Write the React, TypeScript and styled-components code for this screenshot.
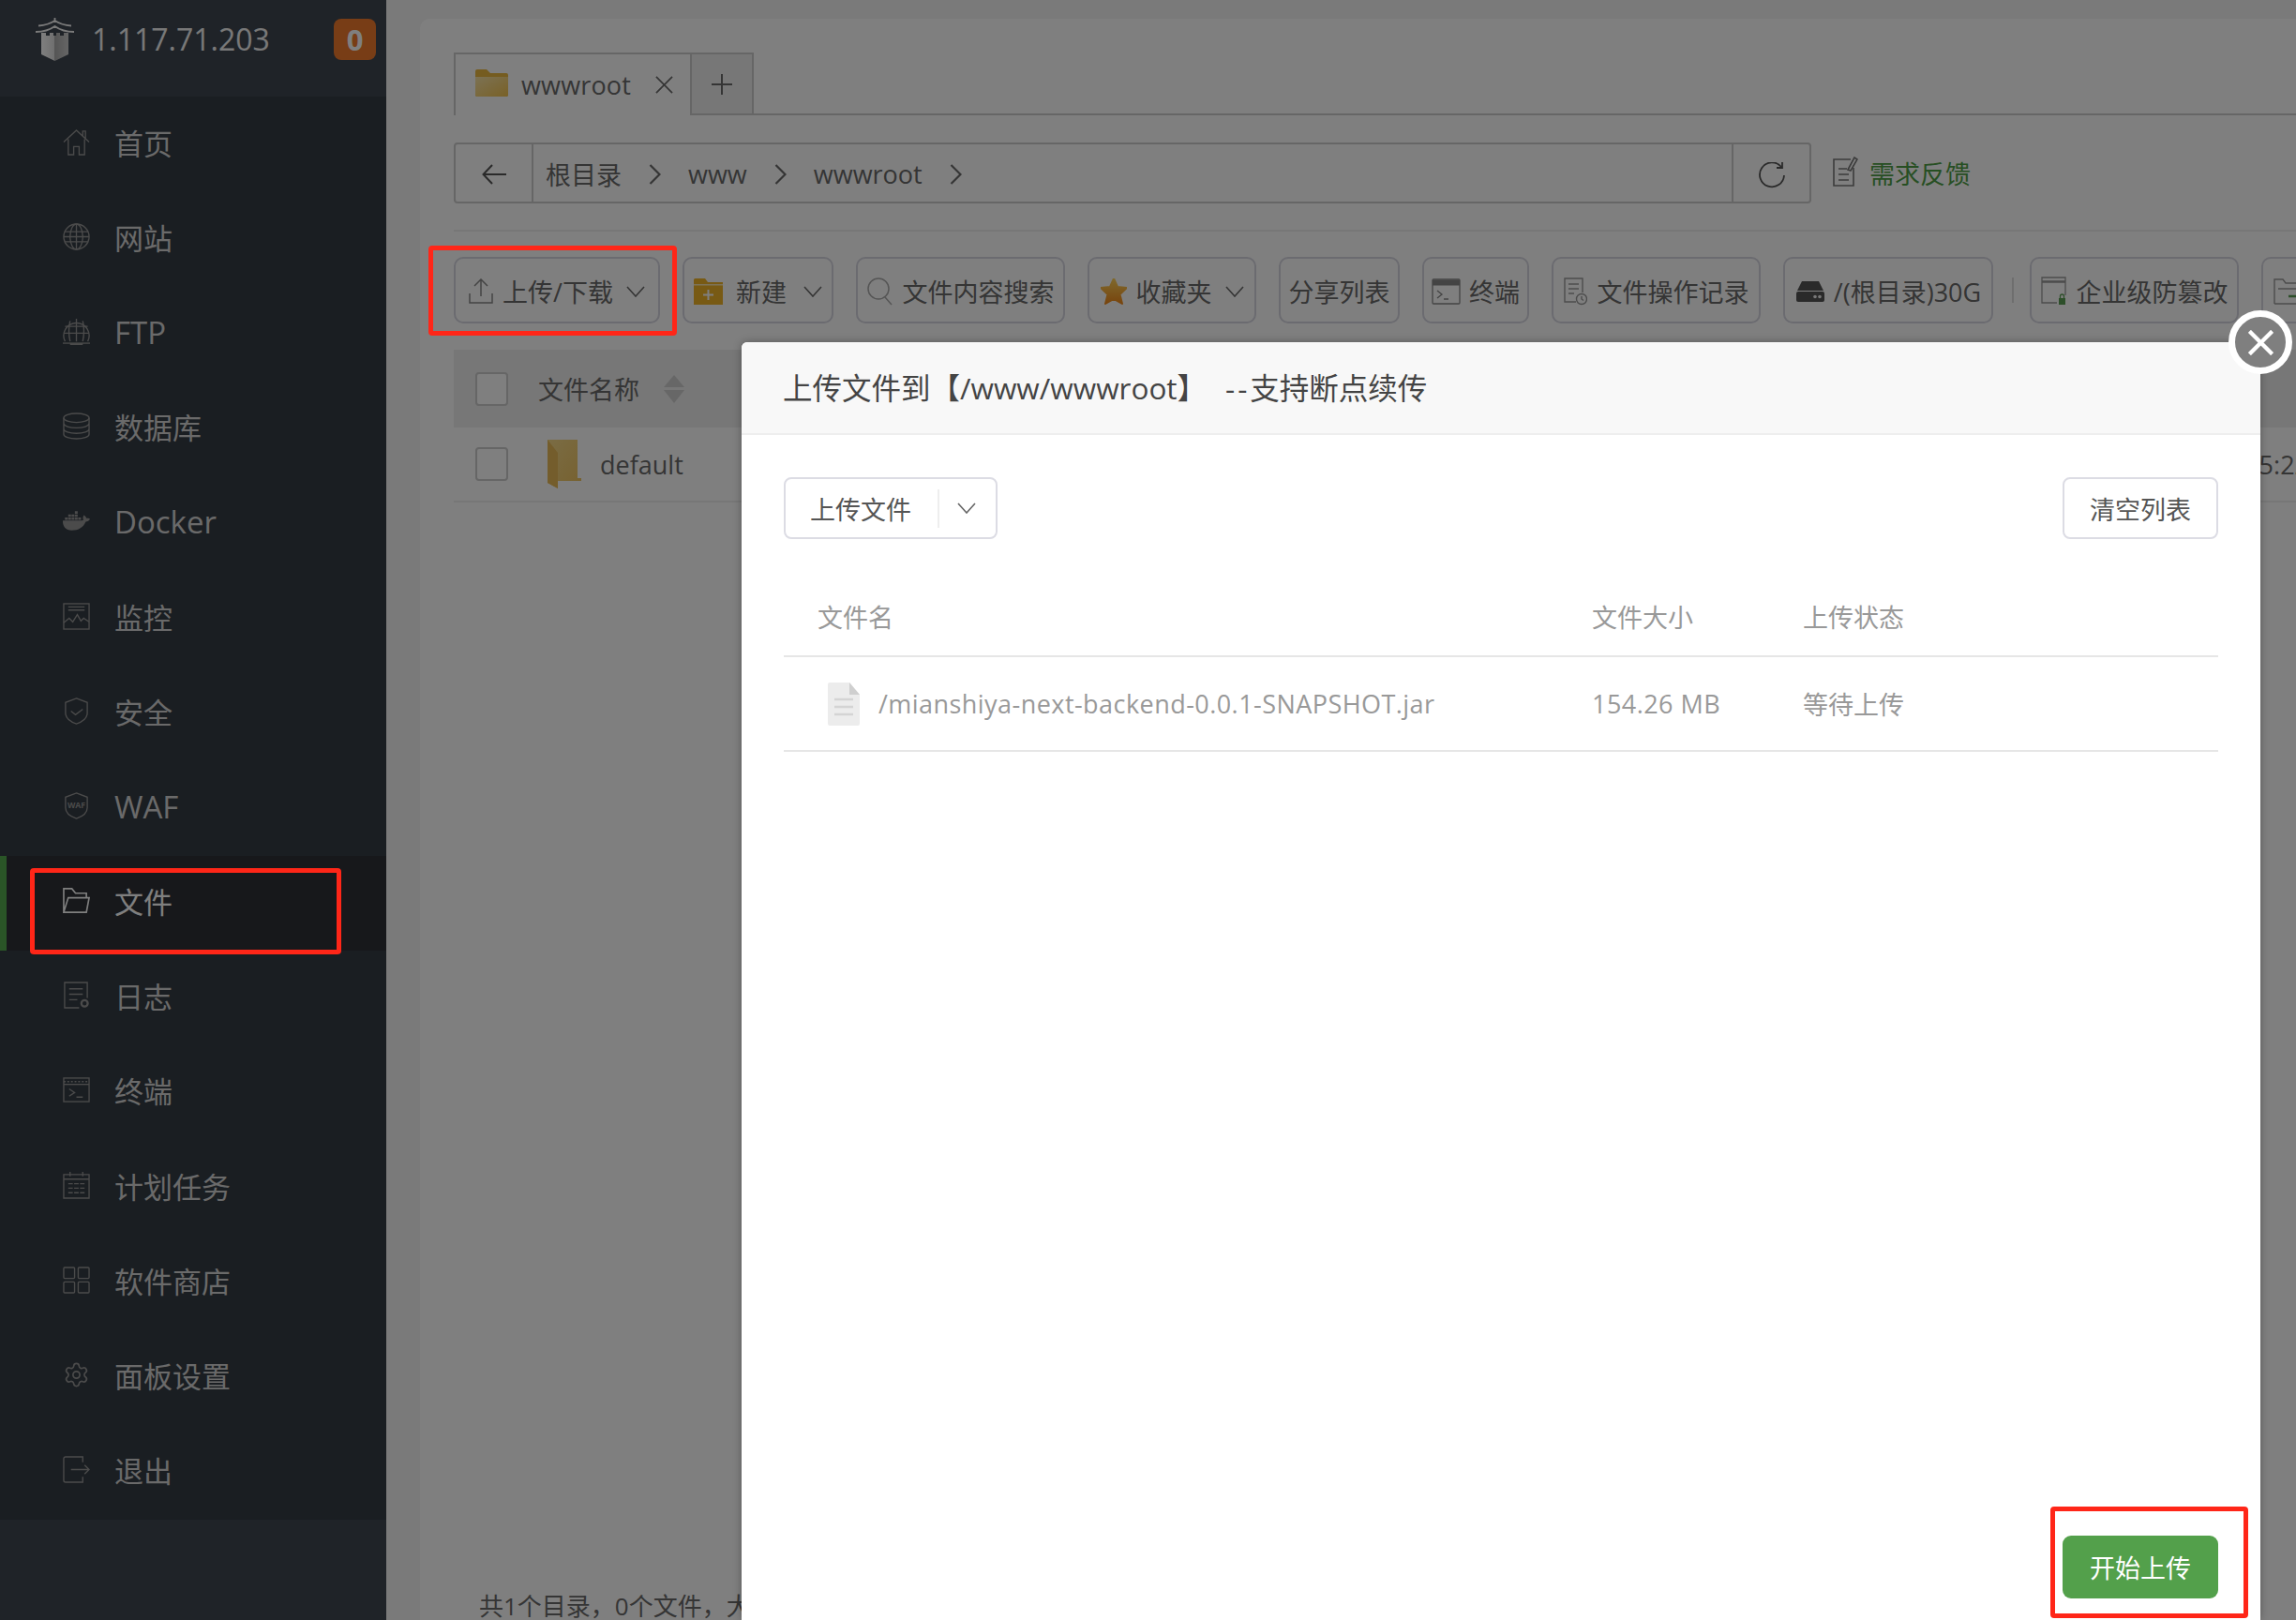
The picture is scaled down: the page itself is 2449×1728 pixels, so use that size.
import React from 'react';
import styled, { createGlobalStyle } from 'styled-components';
import { FaDocker } from 'react-icons/fa';
import { Settings } from 'lucide-react';

const Global = createGlobalStyle`
  html, body { margin: 0; padding: 0; width: 2449px; height: 1728px; overflow: hidden; background: #f4f4f4; }
  #root { width: 2449px; height: 1728px; }
  * { box-sizing: border-box; }
  body { font-family: "Open Sans", "Noto Sans CJK SC", sans-serif; }
`;

const Page = styled.div`
  position: relative; width: 2449px; height: 1728px; display: flex; overflow: hidden; background: #f4f4f4;
`;
const Sidebar = styled.aside`
  width: 412px; height: 100%; flex-shrink: 0; background: #3e4650; display: flex; flex-direction: column;
`;
const SideHead = styled.div`
  height: 103px; display: flex; align-items: flex-start; padding: 19px 11px 0 38px; color: #eee;
`;
const Ip = styled.span`
  margin-left: 19px; font-size: 32px; line-height: 46px; color: #f0f0f0;
`;
const Badge = styled.span`
  margin-left: auto; margin-top: 1px; width: 45px; height: 44px; border-radius: 8px; background: #f07a2c; color: #fff;
  font-size: 31px; font-weight: 700; display: flex; align-items: center; justify-content: center;
`;
const Nav = styled.nav`
  background: #343c44; display: flex; flex-direction: column;
`;
const NavItem = styled.div<{ $active?: boolean }>`
  height: 101.2px; display: flex; align-items: center; padding-left: ${p => (p.$active ? 60 : 67)}px;
  border-left: ${p => (p.$active ? '7px solid #54aa4e' : '0')};
  background: ${p => (p.$active ? '#2e3036' : 'transparent')};
  color: ${p => (p.$active ? '#fff' : '#d4d4d4')};
  font-size: 31px; padding-bottom: 2px;
  & > svg { width: 29px; height: 29px; flex-shrink: 0; margin-top: -3px; color: ${p => (p.$active ? '#fff' : '#969696')}; }
`;
const NavLabel = styled.span<{ $latin?: boolean }>`
  margin-left: 26px; line-height: 40px; font-size: ${p => (p.$latin ? 33 : 31)}px;
`;

const Main = styled.main`
  flex: 1; min-width: 0; padding: 20px 0 0 36px; display: flex;
`;
const Panel = styled.section`
  flex: 1; min-width: 0; background: #fff; border-radius: 10px 0 0 0; padding-left: 36px; display: flex; flex-direction: column; overflow: hidden;
  color: #6a6a6a; font-size: 27px;
`;
const TabRow = styled.div`
  margin-top: 36px; height: 67px; display: flex; flex-shrink: 0; border-bottom: 2px solid #ccc;
`;
const Tab = styled.div`
  width: 254px; height: 67px; background: #fff; border: 2px solid #ccc; border-bottom: 0; display: flex; align-items: center; padding-left: 21px;
  & > svg:first-child { width: 35px; height: 29px; margin-top: -4px; }
`;
const TabName = styled.span`
  margin-left: 14px; width: 143px; letter-spacing: 0.15px;
`;
const TabPlus = styled.div`
  width: 66px; height: 65px; background: #eee; border: 2px solid #ccc; border-left: 0; border-bottom: 0; display: flex; align-items: center; justify-content: center;
`;
const PathRow = styled.div`
  margin-top: 29px; height: 65px; display: flex; align-items: center; flex-shrink: 0;
`;
const PathBar = styled.div`
  width: 1448px; height: 65px; border: 2px solid #ccc; border-radius: 4px; display: flex; align-items: center;
`;
const BackCell = styled.div`
  width: 83px; height: 100%; border-right: 2px solid #ccc; display: flex; align-items: center; justify-content: center; padding-top: 3px;
`;
const Crumbs = styled.div`
  flex: 1; display: flex; align-items: center; gap: 29px; padding: 2px 0 0 13px; color: #6a6a6a;
`;
const RefreshCell = styled.div`
  width: 83px; height: 100%; border-left: 2px solid #ccc; display: flex; align-items: center; justify-content: center; padding-top: 4px;
`;
const Feedback = styled.div`
  margin-left: 23px; display: flex; align-items: center; gap: 12px; color: #4f9e47; font-size: 27px;
  & > svg { margin-top: -3px; }
`;
const Rule = styled.div`
  margin-top: 28px; height: 2px; background: #eee; flex-shrink: 0;
`;
const Toolbar = styled.div`
  margin-top: 27px; height: 71px; display: flex; gap: 24px; flex-shrink: 0; align-items: center;
`;
const ToolBtn = styled.div<{ $w: number; $gap?: number; $left?: boolean }>`
  width: ${p => p.$w}px; height: 71px; flex-shrink: 0; border: 2px solid #d6d6e0; border-radius: 10px; display: flex; align-items: center;
  justify-content: ${p => (p.$left ? 'flex-start' : 'center')}; padding: ${p => (p.$left ? '2px 0 0 11px' : '2px 0 0')}; gap: ${p => p.$gap ?? 11}px;
  color: #6a6a6a; white-space: nowrap; overflow: hidden;
  & > svg:last-child:not(:first-child) { margin-left: 4px; }
`;
const ToolSep = styled.div`
  width: 2px; height: 27px; background: #ddd; margin: 0 -7px 0 -4px; flex-shrink: 0;
`;
const THead = styled.div`
  margin-top: 28px; height: 83px; background: #eee; display: flex; align-items: center; padding-left: 23px; flex-shrink: 0;
`;
const Check = styled.div`
  width: 35px; height: 36px; border: 2px solid #ccc; border-radius: 4px; background: #fff; flex-shrink: 0;
`;
const THeadLabel = styled.span`
  margin-left: 32px; margin-right: 26px;
`;
const Row = styled.div`
  height: 80px; display: flex; align-items: center; padding-left: 23px; border-bottom: 2px solid #eee; flex-shrink: 0;
`;
const RowFolder = styled.div`
  margin-left: 42px; width: 56px; display: flex;
`;
const RowName = styled.span``;
const RowTime = styled.span`
  margin-left: auto; margin-right: -52px; flex-shrink: 0; white-space: nowrap;
`;
const PanelFoot = styled.div`
  margin-top: auto; padding-left: 27px; line-height: 30px; font-size: 26px; white-space: nowrap; color: #6a6a6a;
`;

const Overlay = styled.div`
  position: absolute; inset: 0; background: rgba(0, 0, 0, 0.5);
`;
const Modal = styled.div`
  position: absolute; left: 791px; top: 365px; width: 1620px; height: 1363px; background: #fff; border-radius: 6px 6px 0 0;
  box-shadow: 0 0 10px rgba(0,0,0,.3); display: flex; flex-direction: column; color: #555;
`;
const ModalHead = styled.header`
  height: 99px; background: #f8f8f8; border-bottom: 2px solid #eee; border-radius: 6px 6px 0 0; display: flex; align-items: center; padding: 0 44px 4px; font-size: 31.5px; color: #444; white-space: pre; flex-shrink: 0;
`;
const TitleTail = styled.span`
  margin-left: 20px;
`;
const Dashes = styled.span`
  letter-spacing: 3px;
`;
const ModalBody = styled.div`
  flex: 1; padding: 45px 45px 23px 45px; display: flex; flex-direction: column; min-height: 0;
`;
const ModalTools = styled.div`
  display: flex; justify-content: space-between; align-items: center; flex-shrink: 0;
`;
const Split = styled.div`
  width: 228px; height: 66px; border: 2px solid #dcdce4; border-radius: 8px; display: flex; align-items: center; font-size: 27px; color: #555; padding-left: 26px;
`;
const SplitLine = styled.span`
  width: 2px; height: 41px; background: #eee; margin: 0 19px 0 28px;
`;
const Clear = styled.div`
  width: 166px; height: 66px; border: 2px solid #dcdce4; border-radius: 8px; display: flex; align-items: center; justify-content: center; font-size: 27px; color: #555;
`;
const Grid = styled.div<{ $h: number }>`
  display: grid; grid-template-columns: 862px 225px 1fr; height: ${p => p.$h}px; align-items: center; border-bottom: 2px solid #e6e6e6; font-size: 27px; color: #999; flex-shrink: 0;
`;
const HeadName = styled.span`
  padding-left: 36px;
`;
const FileCell = styled.span`
  display: flex; align-items: center; gap: 20px; padding: 0 0 0 47px; white-space: nowrap; letter-spacing: 0.45px;
`;
const SizeCell = styled.span`
  letter-spacing: 0.45px;
`;
const TableWrap = styled.div`
  margin-top: 40px;
`;
const ModalFoot = styled.div`
  margin-top: auto; display: flex; justify-content: flex-end;
`;
const Primary = styled.button`
  width: 166px; height: 67px; background: #53a04b; color: #fff; border: 0; border-radius: 9px; font: inherit; font-size: 27px;
`;
const CloseBtn = styled.div`
  position: absolute; left: 2377px; top: 331px; width: 68px; height: 68px; border-radius: 50%; border: 7px solid #fff; background: #7f7f7f; display: flex; align-items: center; justify-content: center;
`;
const RedBox = styled.div<{ $l: number; $t: number; $w: number; $h: number }>`
  position: absolute; left: ${p => p.$l}px; top: ${p => p.$t}px; width: ${p => p.$w}px; height: ${p => p.$h}px;
  border: 5px solid #ff2618; border-radius: 4px;
`;

const S: React.FC<React.SVGProps<SVGSVGElement> & { sw?: number }> = ({ children, sw = 1.4, ...r }) => (
  <svg viewBox="0 0 30 30" fill="none" stroke="currentColor" strokeWidth={sw} {...r}>{children}</svg>
);

const Home = () => (
  <S><path d="M1 15 15 2l14 13M22 8.500V3h3v9M6 12v17h6V20h6v9h6V12" /></S>
);
const Globe = () => (
  <S><circle cx="15" cy="15" r="14" /><ellipse cx="15" cy="15" rx="7" ry="14" /><path d="M15 1v28M2 9.500h26M2 20.500h26M1 15h28" /></S>
);
const Ftp = () => (
  <S><path d="M2.500 26A14 14 0 1 1 27.500 26" /><path d="M8 3.500C6.500 10 6.500 19 8 26M22 3.500C23.500 10 23.500 19 22 26M15 1v25M2.500 9.500h25M1 17h28" /><path d="M0 28h30" /><path d="M8 29h14" strokeWidth="2" /></S>
);
const Db = () => (
  <S><ellipse cx="15" cy="6" rx="14" ry="5" /><path d="M1 6v18c0 2.800 6.300 5 14 5s14-2.200 14-5V6M1 12c0 2.800 6.300 5 14 5s14-2.200 14-5M1 18c0 2.800 6.300 5 14 5s14-2.200 14-5" /></S>
);
const Monitor = () => (
  <S><rect x="1" y="1" width="28" height="28" /><path d="M6 4.500h18M6 8h18M1 22l6-5 4 4 5-8 4 7 3-3 6 4" /></S>
);
const Shield = () => (
  <S><path d="M15 1 27 5.500V17c0 6-6 10-12 12C9 27 3 23 3 17V5.500Z" /><path d="m9 15 5 4 8-6" /></S>
);
const Waf = () => (
  <S><path d="M15 1 27 5.500V17c0 6-6 10-12 12C9 27 3 23 3 17V5.500Z" /><text x="15" y="18" fontSize="9" fontWeight="700" fontFamily="Open Sans" textAnchor="middle" fill="currentColor" stroke="none">WAF</text></S>
);
const FolderOpen = () => (
  <S sw={1.7}><path d="M1 28V2h9l4 5h12v5M6 12h23l-3 16H1Z" /></S>
);
const LogIcon = () => (
  <S><path d="M27 18V1H2v28h16M7 8h15M7 14h15M7 20h9" /><circle cx="24" cy="24" r="3.500" strokeWidth="2.400" /></S>
);
const Term = () => (
  <S><rect x="1" y="2" width="28" height="26" /><path d="M1 6h28" strokeDasharray="2 2" strokeWidth="1.500" /><path d="M1 9h28" /><path d="m7 14 6 4-6 4M15 23h7" /></S>
);
const Cal = () => (
  <S><path d="M8 0v5M22 0v5M1 3h28v26H1ZM1 8h28" /><path d="M6 13h18M6 18h18M6 23h18" strokeDasharray="5 1.500" /></S>
);
const Apps = () => (
  <S><rect x="1" y="1" width="12" height="12" rx="1" /><rect x="17" y="1" width="12" height="12" rx="1" /><rect x="1" y="17" width="12" height="12" rx="1" /><rect x="17" y="17" width="12" height="12" rx="1" /></S>
);
const Logout = () => (
  <S><path d="M22 7V1H3a2 2 0 0 0-2 2v24a2 2 0 0 0 2 2h19v-6M9 15h20M24 10l5 5-5 5" /></S>
);
const Logo = () => (
  <svg width="41" height="46" viewBox="0 0 41 46">
    <defs>
      <linearGradient id="lg" x1="0" x2="1"><stop offset="0" stopColor="#fff" /><stop offset=".5" stopColor="#ddd" /><stop offset=".5" stopColor="#aaa" /><stop offset="1" stopColor="#ccc" /></linearGradient>
    </defs>
    <path d="M20.500 0v4M3 8.500C10 8 16 6 20.500 3 25 6 31 8 38 8.500M0 15c8 0 15-2 20.500-6C26 13 33 15 41 15" fill="none" stroke="#f4f4f4" strokeWidth="1.800" />
    <path d="M6 16h5v3h4v-3h4v3h3v-3h4v3h4v-3h5v23L20.500 46 6 39Z" fill="url(#lg)" />
  </svg>
);
const Chev = ({ w = 20, h = 12, c = '#6a6a6a' }: { w?: number; h?: number; c?: string }) => (
  <svg width={w} height={h} viewBox="0 0 20 12" fill="none" stroke={c} strokeWidth="1.600" preserveAspectRatio="none"><path d="M1 1l9 10 9-10" /></svg>
);
const ChevR = () => (
  <svg width="13" height="22" viewBox="0 0 13 22" fill="none" stroke="#6a6a6a" strokeWidth="2.200"><path d="M1.500 1l10 10-10 10" /></svg>
);
const TabFolder = () => (
  <svg viewBox="0 0 35 29">
    <defs><linearGradient id="tf" x1="0" x2="1" y1="0" y2="1"><stop offset="0" stopColor="#f8e4a8" /><stop offset="1" stopColor="#f2c24e" /></linearGradient></defs>
    <path d="M0 2a2 2 0 0 1 2-2h10l4 4h17a2 2 0 0 1 2 2v21a2 2 0 0 1-2 2H2a2 2 0 0 1-2-2Z" fill="#eab940" />
    <path d="M0 8h35v19a2 2 0 0 1-2 2H2a2 2 0 0 1-2-2Z" fill="url(#tf)" />
  </svg>
);
const Upload = () => (
  <svg width="26" height="27" viewBox="0 0 26 27" fill="none" stroke="#888" strokeWidth="1.500"><path d="M13 19V1.500M6 8l7-7 7 7M1 16v10h24V16" /></svg>
);
const NewFolder = () => (
  <svg width="31" height="28" viewBox="0 0 31 28">
    <path d="M0 1.500A1.500 1.500 0 0 1 1.500 0H12l3 4h16v24H0Z" fill="#f0b428" />
    <path d="M0 6h31v1.500H0Z" fill="#fbe7b0" />
    <path d="M15.500 12v11M10 17.500h11" stroke="#fff" strokeWidth="2" />
  </svg>
);
const Search = () => (
  <svg width="27" height="30" viewBox="0 0 27 30" fill="none" stroke="#aaa" strokeWidth="1.500"><circle cx="12" cy="12" r="11" /><path d="M19 21l7 8" /></svg>
);
const Star = () => (
  <svg width="28" height="28" viewBox="0 0 28 28">
    <defs><linearGradient id="st" x1="0" x2="0" y1="0" y2="1"><stop offset="0" stopColor="#ffd35a" /><stop offset="1" stopColor="#f08a1c" /></linearGradient></defs>
    <path d="M14 0l4 9 10 1-7.500 7L23 27l-9-5-9 5 2.500-10L0 10l10-1Z" fill="url(#st)" stroke="url(#st)" strokeWidth="2" strokeLinejoin="round" />
  </svg>
);
const TermTool = () => (
  <svg width="31" height="28" viewBox="0 0 31 28" fill="none" stroke="#888" strokeWidth="1.300">
    <rect x="1" y="1" width="29" height="26" rx="1" /><path d="M1 4.500h29" strokeWidth="6" /><path d="M6 13l5 4-5 4M13 22h5" />
  </svg>
);
const LogTool = () => (
  <svg width="25" height="30" viewBox="0 0 25 30" fill="none" stroke="#999" strokeWidth="1.400">
    <path d="M20 16V1H1v25h12M5 7h11M5 12h11M5 17h6" /><circle cx="19" cy="23" r="5.500" /><path d="M19 20v3l2 1.500" />
  </svg>
);
const Disk = () => (
  <svg width="32" height="22" viewBox="0 0 32 22">
    <path d="M7 0h18l5 10H2Z" fill="#555" /><rect x="1" y="11" width="30" height="11" rx="2" fill="#555" /><circle cx="21" cy="16.500" r="1.800" fill="#eee" /><circle cx="26" cy="16.500" r="1.800" fill="#eee" />
  </svg>
);
const Tamper = () => (
  <svg width="27" height="32" viewBox="0 0 27 32" fill="none" stroke="#999" strokeWidth="1.300">
    <path d="M17 28H1V1h25v19" /><path d="M1 5.500h25" strokeWidth="2.500" /><rect x="19" y="23" width="7" height="7" fill="#5a9e54" stroke="none" /><path d="M20.500 23v-2a2 2 0 0 1 4 0v2" stroke="#5a9e54" />
  </svg>
);
const LastFolder = () => (
  <svg width="30" height="30" viewBox="0 0 30 30" fill="none" stroke="#999" strokeWidth="1.400">
    <path d="M1 28V2h9l3 4h14v6M5 12h24l-3 16H1" /><path d="M16 20h10" stroke="#5a9e54" strokeWidth="2.500" />
  </svg>
);
const Sort = () => (
  <svg width="22" height="30" viewBox="0 0 22 30" fill="#cfcfcf"><path d="M11 0l11 13H0ZM0 16h22L11 30Z" /></svg>
);
const DefaultFolder = () => (
  <svg width="36" height="52" viewBox="0 0 36 52">
    <defs><linearGradient id="df" x1="0" x2="1" y1="0" y2="1"><stop offset="0" stopColor="#f5d98a" /><stop offset="1" stopColor="#eec25e" /></linearGradient></defs>
    <path d="M0 0h32v41h4v3H11v8L0 46Z" fill="url(#df)" /><path d="M0 0l11 14v38L0 46Z" fill="#e8bb58" />
  </svg>
);
const Doc = () => (
  <svg width="34" height="46" viewBox="0 0 34 46">
    <path d="M2 0h21l11 13v31a2 2 0 0 1-2 2H2a2 2 0 0 1-2-2V2a2 2 0 0 1 2-2Z" fill="#ececec" />
    <path d="M23 0l11 13H23Z" fill="#cfcfcf" />
    <path d="M7 18h20M7 26h20M7 34h20" stroke="#d4d4d4" strokeWidth="2.500" />
  </svg>
);
const Note = () => (
  <svg width="27" height="32" viewBox="0 0 27 32" fill="none" stroke="#777" strokeWidth="1.600">
    <path d="M19 3H1v28h21V12M6 13h9M6 19h11M6 25h11" /><path d="M16 14 23 1l3 2-7 12Z" />
  </svg>
);
const Back = () => (
  <svg width="26" height="22" viewBox="0 0 26 22" fill="none" stroke="#555" strokeWidth="2"><path d="M26 11H2M11 1 1.500 11 11 21" /></svg>
);
const Refresh = () => (
  <svg width="28" height="28" viewBox="0 0 28 28" fill="none" stroke="#555" strokeWidth="1.800"><path d="M24 5A13 13 0 1 0 27 14" /><path d="M25 0v6h-6" /></svg>
);
const Cross = ({ s, c, sw }: { s: number; c: string; sw: number }) => (
  <svg width={s} height={s} viewBox="0 0 20 20" fill="none" stroke={c} strokeWidth={sw}><path d="M1 1l18 18M19 1 1 19" /></svg>
);
const Plus = () => (
  <svg width="22" height="22" viewBox="0 0 22 22" fill="none" stroke="#6a6a6a" strokeWidth="2"><path d="M11 0v22M0 11h22" /></svg>
);

const nav: [string, React.ReactNode, boolean?][] = [
  ['首页', <Home />],
  ['网站', <Globe />],
  ['FTP', <Ftp />],
  ['数据库', <Db />],
  ['Docker', <FaDocker />],
  ['监控', <Monitor />],
  ['安全', <Shield />],
  ['WAF', <Waf />],
  ['文件', <FolderOpen />, true],
  ['日志', <LogIcon />],
  ['终端', <Term />],
  ['计划任务', <Cal />],
  ['软件商店', <Apps />],
  ['面板设置', <Settings strokeWidth={1.4} />],
  ['退出', <Logout />],
];

export default function App() {
  return (
    <Page>
      <Global />
      <Sidebar>
        <SideHead>
          <Logo />
          <Ip>1.117.71.203</Ip>
          <Badge>0</Badge>
        </SideHead>
        <Nav>
          {nav.map(([label, icon, active]) => (
            <NavItem key={label} $active={active}>
              {icon}
              <NavLabel $latin={/^[A-Za-z]/.test(label)}>{label}</NavLabel>
            </NavItem>
          ))}
        </Nav>
      </Sidebar>
      <Main>
        <Panel>
          <TabRow>
            <Tab>
              <TabFolder />
              <TabName>wwwroot</TabName>
              <Cross s={19} c="#6a6a6a" sw={1.8} />
            </Tab>
            <TabPlus><Plus /></TabPlus>
          </TabRow>
          <PathRow>
            <PathBar>
              <BackCell><Back /></BackCell>
              <Crumbs>
                <span>根目录</span><ChevR />
                <span>www</span><ChevR />
                <span>wwwroot</span><ChevR />
              </Crumbs>
              <RefreshCell><Refresh /></RefreshCell>
            </PathBar>
            <Feedback><Note />需求反馈</Feedback>
          </PathRow>
          <Rule />
          <Toolbar>
            <ToolBtn $w={220} $gap={10}><Upload />上传/下载<Chev /></ToolBtn>
            <ToolBtn $w={161} $gap={14}><NewFolder />新建<Chev /></ToolBtn>
            <ToolBtn $w={223}><Search />文件内容搜索</ToolBtn>
            <ToolBtn $w={180} $gap={10}><Star />收藏夹<Chev /></ToolBtn>
            <ToolBtn $w={129}>分享列表</ToolBtn>
            <ToolBtn $w={114} $gap={9}><TermTool />终端</ToolBtn>
            <ToolBtn $w={223}><LogTool />文件操作记录</ToolBtn>
            <ToolBtn $w={224} $gap={9}><Disk />/(根目录)30G</ToolBtn>
            <ToolSep />
            <ToolBtn $w={223}><Tamper />企业级防篡改</ToolBtn>
            <ToolBtn $w={180} $left><LastFolder /></ToolBtn>
          </Toolbar>
          <THead>
            <Check />
            <THeadLabel>文件名称</THeadLabel>
            <Sort />
          </THead>
          <Row>
            <Check />
            <RowFolder><DefaultFolder /></RowFolder>
            <RowName>default</RowName>
            <RowTime>2024/12/05 15:22:10</RowTime>
          </Row>
          <PanelFoot>共1个目录，0个文件，大</PanelFoot>
        </Panel>
      </Main>
      <Overlay />
      <RedBox $l={457} $t={262} $w={265} $h={96} />
      <RedBox $l={32} $t={926} $w={332} $h={92} />
      <Modal>
        <ModalHead>上传文件到【/www/wwwroot】<TitleTail><Dashes>--</Dashes>支持断点续传</TitleTail></ModalHead>
        <ModalBody>
          <ModalTools>
            <Split>上传文件<SplitLine /><Chev c="#666" /></Split>
            <Clear>清空列表</Clear>
          </ModalTools>
          <TableWrap>
            <Grid $h={86}>
              <HeadName>文件名</HeadName><span>文件大小</span><span>上传状态</span>
            </Grid>
            <Grid $h={101}>
              <FileCell><Doc />/mianshiya-next-backend-0.0.1-SNAPSHOT.jar</FileCell><SizeCell>154.26 MB</SizeCell><span>等待上传</span>
            </Grid>
          </TableWrap>
          <ModalFoot><Primary>开始上传</Primary></ModalFoot>
        </ModalBody>
      </Modal>
      <CloseBtn><Cross s={27} c="#fff" sw={3.2} /></CloseBtn>
      <RedBox $l={2187} $t={1607} $w={211} $h={119} />
    </Page>
  );
}
